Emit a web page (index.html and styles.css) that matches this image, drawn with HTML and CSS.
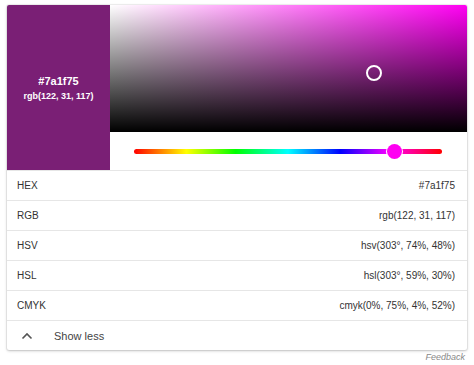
FILE: index.html
```html
<!DOCTYPE html>
<html>

<head>
  <title>Color Picker</title>
  <meta name="viewport" content="width=device-width,initial-scale=1">
  <link rel="stylesheet" href="styles.css">
</head>

<body>
  <div class="picker">
    <div class="picker__top">
      <div class="swatch">
        <span class="swatch__hex">#7a1f75</span>
        <span class="swatch__rgb">rgb(122, 31, 117)</span>
      </div>
      <div class="pane">
        <div class="field">
          <span class="field__cursor"></span>
        </div>
        <div class="hue">
          <div class="hue__track">
            <span class="hue__thumb"></span>
          </div>
        </div>
      </div>
    </div>
    <div class="row"><span>HEX</span><span>#7a1f75</span></div>
    <div class="row"><span>RGB</span><span>rgb(122, 31, 117)</span></div>
    <div class="row"><span>HSV</span><span>hsv(303°, 74%, 48%)</span></div>
    <div class="row"><span>HSL</span><span>hsl(303°, 59%, 30%)</span></div>
    <div class="row"><span>CMYK</span><span>cmyk(0%, 75%, 4%, 52%)</span></div>
    <div class="row row--toggle">
      <svg class="chevron" width="12" height="8" viewBox="0 0 12 8">
        <path d="M1.5 6.5 L6 2 L10.5 6.5" fill="none" stroke="#555" stroke-width="1.6"/>
      </svg>
      <span>Show less</span>
    </div>
  </div>
  <p class="feedback">Feedback</p>
</body>

</html>
```

FILE: styles.css
```css
body {
  margin: 0;
  background: #fff;
  font-family: 'Liberation Sans', Arial, sans-serif;
  font-size: 10px;
  color: #333;
}

.picker {
  margin: 5px 7px 0;
  width: 460px;
  border-radius: 2px;
  overflow: hidden;
  box-shadow: 0 1px 3px rgba(0, 0, 0, 0.22), 0 0 0 1px rgba(0, 0, 0, 0.05);
}

.picker__top {
  display: flex;
  height: 165px;
}

.swatch {
  width: 103px;
  background: #7a1f75;
  color: #fff;
  font-weight: bold;
  display: flex;
  flex-direction: column;
  align-items: center;
  justify-content: center;
  gap: 4px;
}

.swatch__hex {
  font-size: 11px;
}

.swatch__rgb {
  font-size: 9px;
}

.pane {
  flex: 1;
  display: flex;
  flex-direction: column;
}

.field {
  position: relative;
  height: 127px;
  background: linear-gradient(to top, #000, rgba(0, 0, 0, 0)),
    linear-gradient(to right, #fff, #ff00f2);
}

.field__cursor {
  position: absolute;
  left: 256px;
  top: 60px;
  width: 12px;
  height: 12px;
  border: 2px solid #fff;
  border-radius: 50%;
}

.hue {
  flex: 1;
  display: flex;
  align-items: center;
  padding: 0 25px 0 24px;
}

.hue__track {
  position: relative;
  flex: 1;
  height: 5px;
  border-radius: 3px;
  background: linear-gradient(to right, #f00 0%, #ff0 17%, #0f0 33%, #0ff 50%, #00f 67%, #f0f 83%, #f00 100%);
}

.hue__thumb {
  position: absolute;
  left: 253px;
  top: -5px;
  width: 15px;
  height: 15px;
  border-radius: 50%;
  background: #ff00f2;
  box-shadow: 0 0 0 1px #fff;
}

.row {
  display: flex;
  justify-content: space-between;
  align-items: center;
  height: 29px;
  padding: 0 12px 0 10px;
  border-top: 1px solid #e6e6e6;
}

.row--toggle {
  justify-content: flex-start;
  color: #444;
  font-size: 11px;
}

.chevron {
  margin: 0 21px 0 4px;
}

.feedback {
  margin: 2px 9px 0 0;
  text-align: right;
  font-style: italic;
  font-size: 9px;
  color: #888;
}
```
